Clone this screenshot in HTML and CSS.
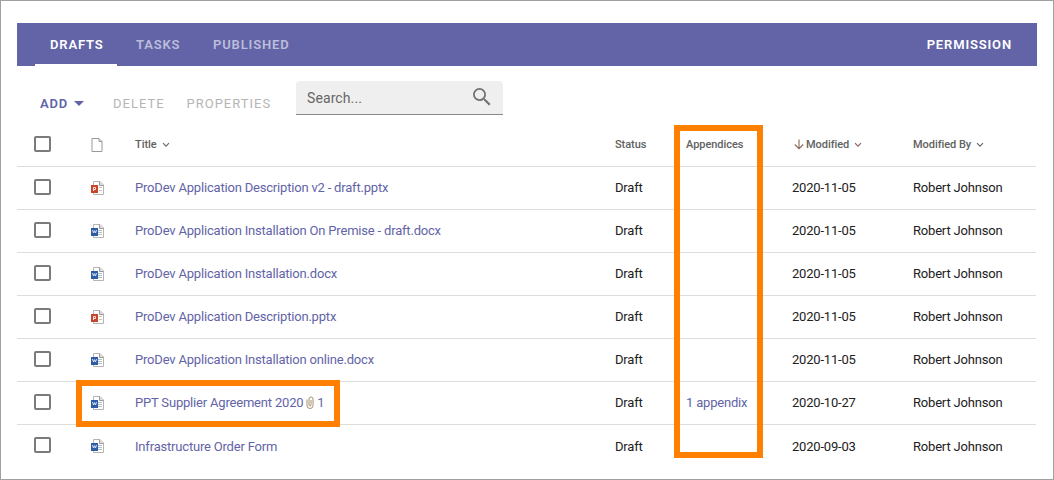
FILE: index.html
```html
<!DOCTYPE html>
<html lang="en">
<head>
<meta charset="utf-8">
<title>Drafts</title>
<link rel="stylesheet" href="styles.css">
</head>
<body>
<svg class="defs" aria-hidden="true">
  <symbol id="chevron" viewBox="0 0 8 6"><path d="M1 1.2 4 4.2 7 1.2" fill="none" stroke="currentColor" stroke-width="1.1"/></symbol>
  <symbol id="page" viewBox="0 0 12 14"><path d="M1 .5H8L11 3.5V13.5H1ZM8 .5V3.5H11" fill="#fff" stroke="#999"/></symbol>
  <symbol id="lines" viewBox="0 0 13 14"><path d="M2.5.5H9L12.5 4V13.5H2.5Z" fill="#fff" stroke="#b4b4b4"/><path d="M8.5.5V4.5H12.5" fill="#ddd" stroke="#999"/></symbol>
  <symbol id="word" viewBox="0 0 13 14"><use href="#lines"/><path d="M7 6.5h4M7 8.5h4M7 10.5h4" stroke="#b4bfcd"/><path d="M0 4H7V12H0Z" fill="#2f5da5"/><path d="M1.5 6 2.5 9 3.5 6.7 4.5 9 5.5 6" fill="none" stroke="#dce6f5" stroke-width="1"/></symbol>
  <symbol id="ppt" viewBox="0 0 13 14"><use href="#lines"/><path d="M8 6.5h3M8 9.5h3" stroke="#dcb9ac"/><path d="M0 4H7V12H0Z" fill="#c4472b"/><path d="M2.5 10V6.5H4.5V8.5H2.5" fill="none" stroke="#fbe1d8" stroke-width="1"/></symbol>
</svg>
<main class="window">
  <nav class="tabs">
    <a class="tab active">DRAFTS</a><a class="tab">TASKS</a><a class="tab">PUBLISHED</a><a class="permission">PERMISSION</a>
  </nav>
  <div class="toolbar">
    <span class="action add">ADD<i class="caret"></i></span><span class="action delete">DELETE</span><span class="action properties">PROPERTIES</span>
    <div class="search"><span>Search...</span>
      <svg width="24" height="24" viewBox="0 0 24 24"><path fill="#707070" d="M15.5 14h-.79l-.28-.27A6.47 6.47 0 0 0 16 9.5 6.5 6.5 0 1 0 9.5 16c1.61 0 3.09-.59 4.23-1.57l.27.28v.79l5 4.99L20.49 19zm-6 .25a4.75 4.75 0 1 1 0-9.5 4.75 4.75 0 0 1 0 9.5z"/></svg>
    </div>
  </div>
  <div class="table">
    <div class="row head"><div class="check"><i></i></div><div class="file"><svg width="12" height="14"><use href="#page"/></svg></div><div>Title<svg class="chev" width="8" height="6"><use href="#chevron"/></svg></div><div>Status</div><div>Appendices</div><div class="sorted"><svg class="arrow" width="10" height="11" viewBox="0 0 10 11"><path d="M5 .5V9.5M.8 5.5 5 9.7 9.2 5.5" fill="none" stroke="#8a6a58" stroke-width="1.1"/></svg>Modified<svg class="chev warm" width="8" height="6"><use href="#chevron"/></svg></div><div>Modified By<svg class="chev" width="8" height="6"><use href="#chevron"/></svg></div></div>
    <div class="row"><div class="check"><i></i></div><div class="file"><svg width="13" height="14"><use href="#ppt"/></svg></div><div class="link">ProDev Application Description v2 - draft.pptx</div><div>Draft</div><div></div><div>2020-11-05</div><div>Robert Johnson</div></div>
    <div class="row"><div class="check"><i></i></div><div class="file"><svg width="13" height="14"><use href="#word"/></svg></div><div class="link">ProDev Application Installation On Premise - draft.docx</div><div>Draft</div><div></div><div>2020-11-05</div><div>Robert Johnson</div></div>
    <div class="row"><div class="check"><i></i></div><div class="file"><svg width="13" height="14"><use href="#word"/></svg></div><div class="link">ProDev Application Installation.docx</div><div>Draft</div><div></div><div>2020-11-05</div><div>Robert Johnson</div></div>
    <div class="row"><div class="check"><i></i></div><div class="file"><svg width="13" height="14"><use href="#ppt"/></svg></div><div class="link">ProDev Application Description.pptx</div><div>Draft</div><div></div><div>2020-11-05</div><div>Robert Johnson</div></div>
    <div class="row"><div class="check"><i></i></div><div class="file"><svg width="13" height="14"><use href="#word"/></svg></div><div class="link">ProDev Application Installation online.docx</div><div>Draft</div><div></div><div>2020-11-05</div><div>Robert Johnson</div></div>
    <div class="row"><div class="check"><i></i></div><div class="file"><svg width="13" height="14"><use href="#word"/></svg></div><div class="link">PPT Supplier Agreement 2020<svg class="clip" width="8" height="13" viewBox="0 0 8 13"><path d="M1 3.5V9.5A3 3 0 0 0 7 9.5V3A2 2 0 0 0 3 3V9A1 1 0 0 0 5 9V4" fill="none" stroke="#a8916f"/></svg>1</div><div>Draft</div><div class="link">1 appendix</div><div>2020-10-27</div><div>Robert Johnson</div></div>
    <div class="row last"><div class="check"><i></i></div><div class="file"><svg width="13" height="14"><use href="#word"/></svg></div><div class="link">Infrastructure Order Form</div><div>Draft</div><div></div><div>2020-09-03</div><div>Robert Johnson</div></div>
  </div>
  <div class="highlight column"></div>
  <div class="highlight item"></div>
</main>
</body>
</html>
```
FILE: styles.css
```css
* { box-sizing: border-box; }
body { margin: 0; font-family: Roboto, sans-serif; font-size: 13px; color: #212121; background: #fff; }
svg { display: block; flex: none; }
.defs { position: absolute; width: 0; height: 0; }
.window { position: relative; height: 480px; border: 1px solid #a0a0a0; padding: 22px 16px 0; }
.tabs { display: flex; height: 43px; padding: 0 25px 0 18px; background: #6264a7; font-weight: 600; letter-spacing: .85px; line-height: 43px; }
.tab { color: #bcbddb; padding: 0 15px; margin-right: 2.6px; }
.tab.active { width: 82px; color: #fff; border-bottom: 2px solid #fff; margin-right: 4px; }
.permission { color: #fff; margin-left: auto; }
.toolbar { display: flex; height: 57px; padding: 15px 0 0 23px; font-weight: 400; letter-spacing: 1px; }
.action { line-height: 45px; height: 34px; color: #b5b5b5; }
.add { display: flex; align-items: center; color: #6264a7; font-weight: 600; width: 73px; height: 45px; letter-spacing: .8px; }
.caret { border: 5px solid transparent; border-top-color: #6264a7; border-bottom: 0; margin-left: 6px; }
.delete { width: 73.5px; }
.properties { width: 109.5px; }
.search { width: 207px; height: 34px; padding: 0 10px 2px 11px; display: flex; align-items: center; justify-content: space-between; background: #efefef; border-bottom: 1px solid #888; border-radius: 4px 4px 0 0; color: #666; font-size: 14px; font-weight: 400; letter-spacing: .1px; }
.search span { padding-top: 2px; }
.search svg { margin-right: -1px; }
.row { display: grid; grid-template-columns: 74px 44px 480px 71px 106px 121px 1fr; height: 43px; margin-right: 1px; align-items: center; border-bottom: 1px solid #ddd; letter-spacing: -.19px; }
.row > div { display: flex; align-items: center; white-space: nowrap; padding-bottom: 2px; }
.row.head { height: 44px; font-size: 11px; font-weight: 500; color: #616161; letter-spacing: -.05px; }
.row.head > div { padding-bottom: 0; }
.row.last { height: 42px; border-bottom: 0; }
.row.last > div:nth-child(n+3) { padding: 1px 0 0; }
.row .check, .row.head .check { padding: 0 0 2px 17px; }
.check i { width: 17px; height: 16px; border: 2px solid #7b7b7b; border-radius: 2px; }
.row .file { padding: 0; }
.link { color: #6264a7; }
.chev { margin: 1px 0 0 5px; color: #666; }
.warm { color: #8a6060; }
.arrow { margin: 0 2px 0 2px; }
.clip { margin: 0 3px; }
.highlight { position: absolute; border: 6px solid #ff8000; }
.column { left: 673px; top: 124px; width: 89px; height: 333px; }
.item { left: 75px; top: 379px; width: 264px; height: 47px; }
```
